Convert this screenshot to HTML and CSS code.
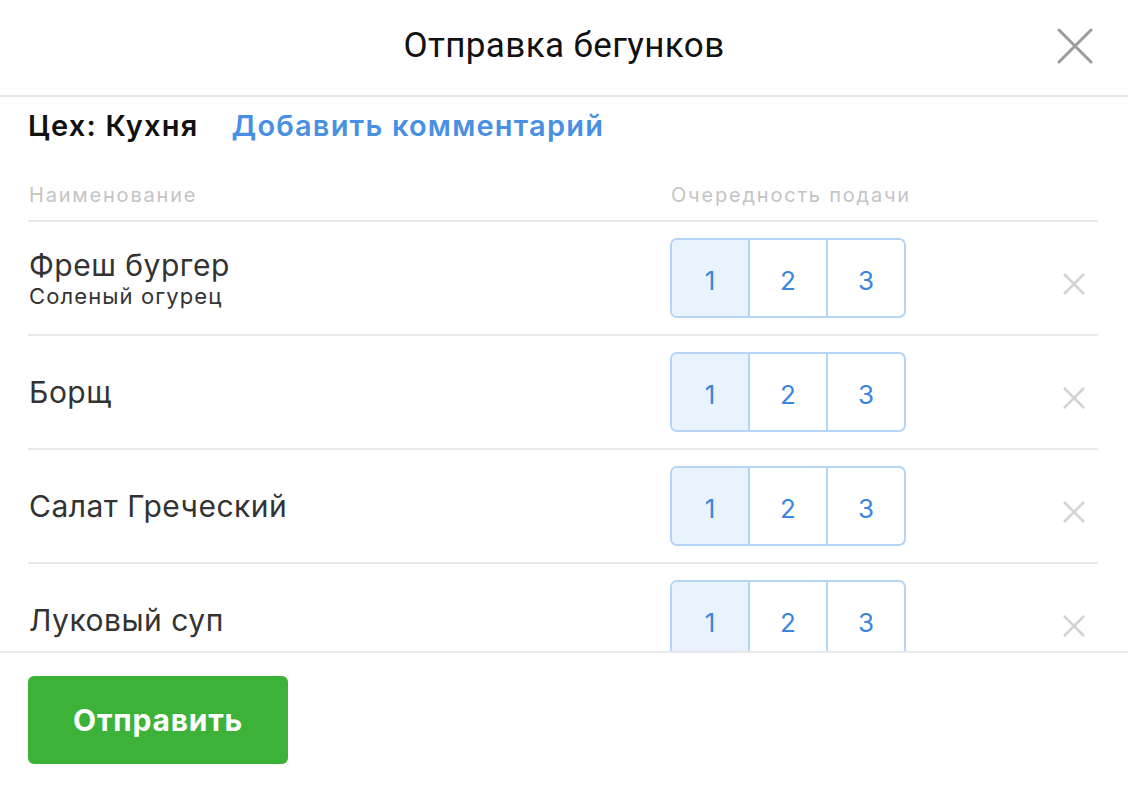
FILE: index.html
```html
<!DOCTYPE html>
<html lang="ru">
<head>
<meta charset="utf-8">
<title>Отправка бегунков</title>
<link rel="stylesheet" href="styles.css">
</head>
<body>
<div class="modal">
  <header class="header">
    <h1 class="title">Отправка бегунков</h1>
    <button class="close" aria-label="Закрыть">
      <svg width="36" height="36" viewBox="0 0 36 36"><path d="M2 2 L34 34 M34 2 L2 34" stroke="#9b9b9b" stroke-width="3" stroke-linecap="round" fill="none"/></svg>
    </button>
  </header>
  <div class="content">
    <div class="workshop">
      <span class="ws-name">Цех: Кухня</span>
      <a class="add-comment" href="#">Добавить комментарий</a>
    </div>
    <div class="table-head">
      <span>Наименование</span>
      <span>Очередность подачи</span>
      <span></span>
    </div>
    <div class="rows">
      <div class="row">
        <div class="name"><div class="dish">Фреш бургер</div><div class="mod">Соленый огурец</div></div>
        <div class="seg"><span class="cell active">1</span><span class="cell">2</span><span class="cell">3</span></div>
        <button class="remove" aria-label="Удалить"><svg width="24" height="24" viewBox="0 0 24 24"><path d="M2 2 L22 22 M22 2 L2 22" stroke="#d3d3d3" stroke-width="2.6" fill="none"/></svg></button>
      </div>
      <div class="row">
        <div class="name"><div class="dish">Борщ</div></div>
        <div class="seg"><span class="cell active">1</span><span class="cell">2</span><span class="cell">3</span></div>
        <button class="remove" aria-label="Удалить"><svg width="24" height="24" viewBox="0 0 24 24"><path d="M2 2 L22 22 M22 2 L2 22" stroke="#d3d3d3" stroke-width="2.6" fill="none"/></svg></button>
      </div>
      <div class="row">
        <div class="name"><div class="dish">Салат Греческий</div></div>
        <div class="seg"><span class="cell active">1</span><span class="cell">2</span><span class="cell">3</span></div>
        <button class="remove" aria-label="Удалить"><svg width="24" height="24" viewBox="0 0 24 24"><path d="M2 2 L22 22 M22 2 L2 22" stroke="#d3d3d3" stroke-width="2.6" fill="none"/></svg></button>
      </div>
      <div class="row">
        <div class="name"><div class="dish">Луковый суп</div></div>
        <div class="seg"><span class="cell active">1</span><span class="cell">2</span><span class="cell">3</span></div>
        <button class="remove" aria-label="Удалить"><svg width="24" height="24" viewBox="0 0 24 24"><path d="M2 2 L22 22 M22 2 L2 22" stroke="#d3d3d3" stroke-width="2.6" fill="none"/></svg></button>
      </div>
    </div>
  </div>
  <footer class="footer">
    <button class="submit">Отправить</button>
  </footer>
</div>
</body>
</html>
```
FILE: styles.css
```css
* { box-sizing: border-box; }
html, body { margin: 0; padding: 0; background: #fff; }
body {
  font-family: Inter, "Noto Sans", sans-serif;
  color: #333;
}
.modal {
  width: 1128px;
  height: 790px;
  display: flex;
  flex-direction: column;
  overflow: hidden;
}
.header {
  height: 97px;
  flex: none;
  border-bottom: 2px solid #e8e8e8;
  display: flex;
  align-items: center;
  justify-content: center;
  position: relative;
}
.title {
  margin: 0 0 4px;
  font-family: Roboto, sans-serif;
  font-weight: 400;
  font-size: 35px;
  color: #111;
  letter-spacing: 0.4px;
}
.close {
  position: absolute;
  right: 35px;
  top: 28px;
  width: 36px;
  height: 36px;
  padding: 0;
  border: 0;
  background: none;
  display: flex;
}
.content {
  flex: 1;
  overflow: hidden;
  padding: 0 30px 0 28px;
}
.workshop {
  padding-top: 12px;
  line-height: 34px;
  display: flex;
  gap: 33px;
  font-size: 29px;
  font-weight: 600;
  letter-spacing: 1.2px;
}
.ws-name { color: #111; }
.add-comment { color: #4a90e2; text-decoration: none; }
.table-head {
  display: grid;
  grid-template-columns: 1fr 236px 192px;
  padding: 40px 0 13px;
  line-height: 24px;
  font-size: 20px;
  letter-spacing: 1.8px;
  color: #c4c4c4;
  border-bottom: 2px solid #e8e8e8;
}
.table-head span:first-child { padding-left: 1px; }
.table-head span:nth-child(2) { padding-left: 1px; white-space: nowrap; }
.row {
  display: grid;
  grid-template-columns: 1fr 236px 192px;
  align-items: center;
  padding: 16px 0;
  border-bottom: 2px solid #e8e8e8;
}
.name { padding-left: 1px; }
.dish { font-size: 30px; line-height: 36px; letter-spacing: 0.5px; color: #333; }
.mod { font-size: 22px; line-height: 26px; letter-spacing: 1.1px; color: #333; }
.seg {
  height: 80px;
  display: flex;
  border: 2px solid #b4d5f8;
  border-radius: 7px;
  overflow: hidden;
}
.cell {
  flex: 1;
  display: flex;
  align-items: center;
  justify-content: center;
  padding-top: 5px;
  font-size: 26px;
  color: #3a86de;
}
.cell + .cell { border-left: 2px solid #b4d5f8; }
.cell.active { background: #e8f3fd; }
.remove {
  justify-self: end;
  margin: 11px 12px 0 0;
  width: 24px;
  height: 24px;
  padding: 0;
  border: 0;
  background: none;
  display: flex;
}
.footer {
  height: 139px;
  flex: none;
  border-top: 2px solid #e8e8e8;
  padding: 23px 28px;
}
.submit {
  width: 260px;
  height: 88px;
  border: 0;
  border-radius: 6px;
  background: #3db239;
  color: #fff;
  font-family: Inter, sans-serif;
  font-weight: 700;
  font-size: 30px;
  letter-spacing: 0.8px;
}
```
